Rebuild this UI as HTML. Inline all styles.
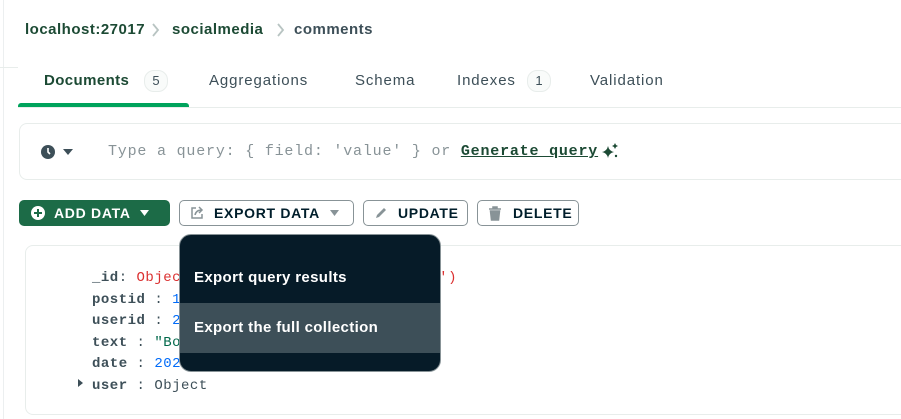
<!DOCTYPE html><html><head><style>
body{margin:0;width:901px;height:419px;overflow:hidden;background:#fff;font-family:"Liberation Sans",sans-serif;position:relative}
.a{position:absolute;white-space:nowrap}
.mono{font-family:"Liberation Mono",monospace}
.tab{font-size:15px;letter-spacing:0.9px;color:#3d4f58;top:72px}
.btn{position:absolute;top:200px;height:24px;border:1px solid #889397;border-radius:5px;box-sizing:content-box;font-weight:bold;font-size:14px;letter-spacing:0.7px;color:#001e2b;display:flex;align-items:center}
.bc{top:21px;font-size:15px;font-weight:bold;color:#1c4a34;letter-spacing:0.5px}
</style></head><body>
<div class="a" style="left:3px;top:0;width:1px;height:419px;background:#eceff0"></div>
<div class="a bc" style="left:25px">localhost:27017</div>
<svg class="a" style="left:152px;top:23px" width="8" height="14"><path d="M1 1l5 6-5 6" stroke="#b8c4c2" stroke-width="1.8" fill="none"/></svg>
<div class="a bc" style="left:172px">socialmedia</div>
<svg class="a" style="left:277px;top:23px" width="8" height="14"><path d="M1 1l5 6-5 6" stroke="#b8c4c2" stroke-width="1.8" fill="none"/></svg>
<div class="a bc" style="left:294px;color:#3d4f58">comments</div>
<div class="a" style="left:0;top:67px;width:18px;height:1px;background:#e8edeb"></div>
<div class="a tab" style="left:44px;font-weight:bold;color:#1c4a34;letter-spacing:0.4px">Documents</div>
<div class="a" style="left:144px;top:70px;width:22px;height:20px;border:1px solid #e8edeb;border-radius:10px;background:#f9fbfa;font-size:13px;text-align:center;line-height:20px;color:#3d4f58">5</div>
<div class="a tab" style="left:209px">Aggregations</div>
<div class="a tab" style="left:355px">Schema</div>
<div class="a tab" style="left:457px">Indexes</div>
<div class="a" style="left:527px;top:70px;width:22px;height:20px;border:1px solid #e8edeb;border-radius:10px;background:#f9fbfa;font-size:13px;text-align:center;line-height:20px;color:#3d4f58">1</div>
<div class="a tab" style="left:590px">Validation</div>
<div class="a" style="left:18px;top:107px;width:883px;height:1px;background:#e8edeb"></div>
<div class="a" style="left:18px;top:103px;width:171px;height:4px;background:#00a35c;border-radius:3px 3px 0 0"></div>
<div class="a" style="left:19px;top:123px;width:900px;height:55px;border:1px solid #e8edeb;border-radius:8px"></div>
<svg class="a" style="left:40px;top:144px" width="16" height="16"><circle cx="8" cy="8" r="7" fill="#3d4f58"/><path d="M8 4v4l2 2" stroke="#fff" stroke-width="1.6" fill="none"/></svg>
<svg class="a" style="left:63px;top:148px" width="10" height="8"><path d="M0 1h10L5 7z" fill="#3d4f58"/></svg>
<div class="a mono" style="left:108px;top:143px;font-size:15px;letter-spacing:0.8px;color:#889397">Type a query: { field: 'value' } or <span style="color:#1c4a34;font-weight:bold;text-decoration:underline">Generate query</span></div>
<svg class="a" style="left:601px;top:142px" width="18" height="18"><path d="M7 4Q8 9 13 10Q8 11 7 16Q6 11 1 10Q6 9 7 4z" fill="#1c4a34"/><path d="M14 1l1 2 2 1-2 1-1 2-1-2-2-1 2-1z" fill="#1c4a34"/><circle cx="15" cy="14" r="1.2" fill="#1c4a34"/></svg>
<div class="btn" style="left:19px;width:149px;background:#1c6b47;border-color:#1c6b47;color:#fff"><svg style="margin-left:10px" width="16" height="16"><circle cx="8" cy="8" r="7" fill="#fff"/><path d="M8 4v8M4 8h8" stroke="#1c6b47" stroke-width="2"/></svg><span style="margin-left:8px">ADD DATA</span><svg style="margin-left:9px" width="9" height="6"><path d="M0 0h9L4.5 6z" fill="#fff"/></svg></div>
<div class="btn" style="left:179px;width:173px;"><svg style="margin-left:10px" width="14" height="14"><path d="M6 2H2v10h10V8" stroke="#889397" stroke-width="1.5" fill="none"/><path d="M5 9Q6 4 12 4M9 1l3 3-3 3" stroke="#889397" stroke-width="1.5" fill="none"/></svg><span style="margin-left:10px">EXPORT DATA</span><svg style="margin-left:10px" width="9" height="6"><path d="M0 0h9L4.5 6z" fill="#889397"/></svg></div>
<div class="btn" style="left:363px;width:103px;"><svg style="margin-left:10px" width="14" height="14"><path d="M2 12l1-3 7-7 2 2-7 7z" fill="#889397"/></svg><span style="margin-left:10px">UPDATE</span></div>
<div class="btn" style="left:477px;width:100px;"><svg style="margin-left:10px" width="14" height="15"><path d="M1 3h12M5 3V1h4v2M2.5 5h9l-1 9h-7z" stroke="#889397" stroke-width="1.5" fill="#889397"/></svg><span style="margin-left:11px">DELETE</span></div>
<div class="a" style="left:25px;top:245px;width:900px;height:168px;border:1px solid #e8edeb;border-radius:8px"></div>
<div class="a mono" style="left:92px;top:268px;font-size:14px;letter-spacing:0.5px;line-height:21.5px;color:#3d4f58;white-space:pre"><b>_id</b>: <span style="color:#db3030">ObjectId('6560000000000000000001ct')</span>
<b>postid</b> : <span style="color:#016bf8">1</span>
<b>userid</b> : <span style="color:#016bf8">2</span>
<b>text</b> : <span style="color:#00684a">"Bo</span>
<b>date</b> : <span style="color:#016bf8">2023</span>
<b>user</b> : Object</div>
<svg class="a" style="left:78px;top:379px" width="6" height="8"><path d="M0 0l5 4-5 4z" fill="#3d4f58"/></svg>
<div class="a" style="left:179px;top:234px;width:260px;height:136px;background:#061b28;border:1px solid #889397;border-radius:12px;overflow:hidden">
<div style="position:absolute;left:0;top:68px;width:260px;height:50px;background:#3d4f58"></div>
<div style="position:absolute;left:14px;top:34px;color:#fff;font-size:15px;font-weight:bold;letter-spacing:0.35px">Export query results</div>
<div style="position:absolute;left:14px;top:84px;color:#fff;font-size:15px;font-weight:bold;letter-spacing:0.35px">Export the full collection</div>
</div>
</body></html>
